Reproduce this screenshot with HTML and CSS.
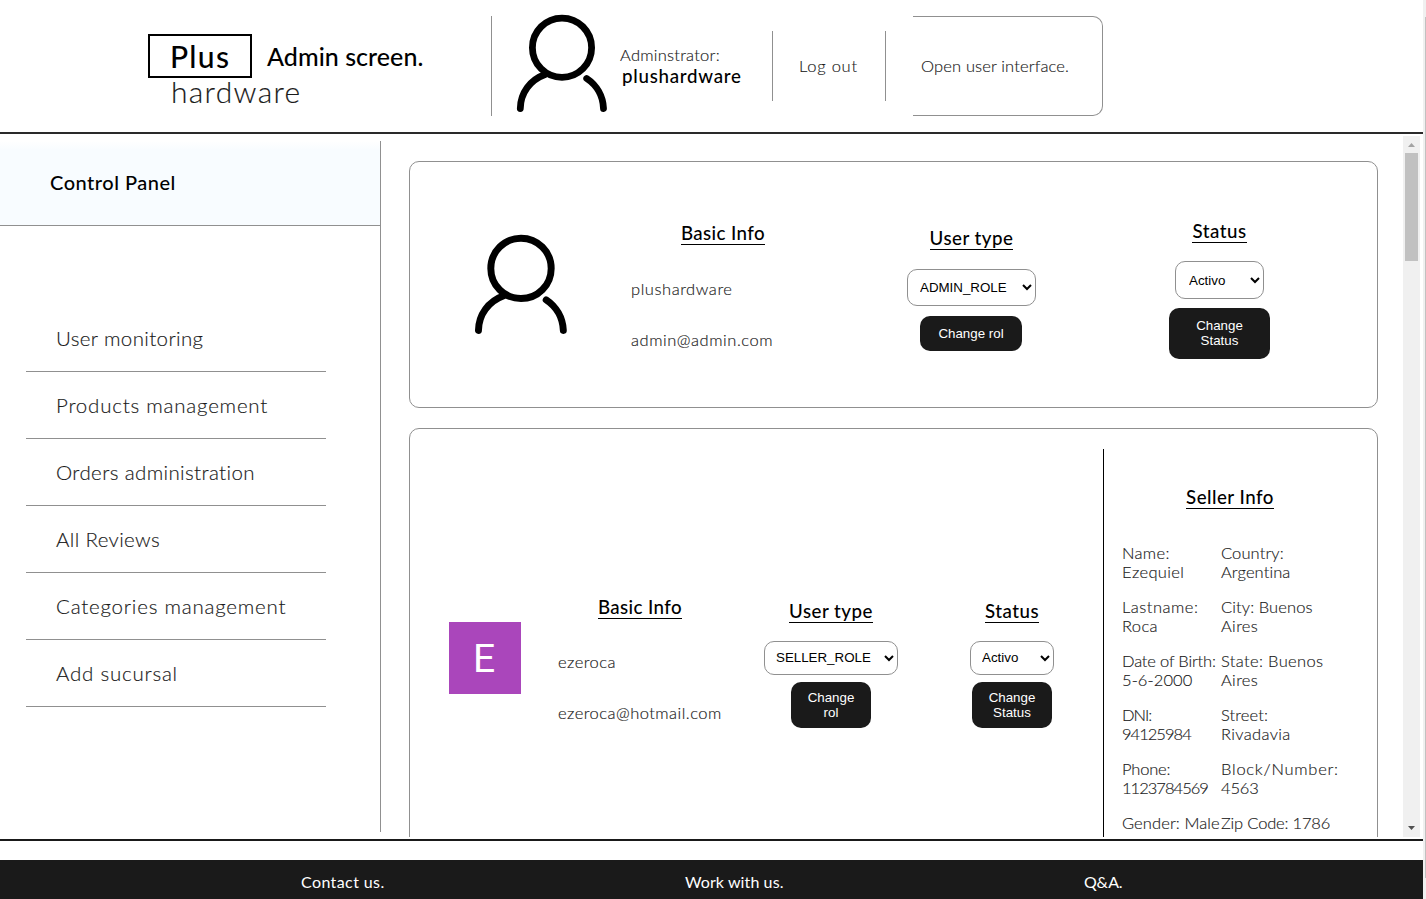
FILE: index.html
```html
<!DOCTYPE html>
<html lang="en">
<head>
<meta charset="utf-8">
<title>Plus hardware - Admin</title>
<link rel="stylesheet" href="styles.css">
</head>
<body>
<svg class="defs" aria-hidden="true">
  <symbol id="user" viewBox="0 0 100 100">
    <g fill="none" stroke="#000" stroke-width="6.8" stroke-linecap="round">
      <circle cx="50" cy="34.700" r="29.600"/>
      <path d="M33 61.500C18 67 8.500 80 8.300 95.500"/>
      <path d="M74.700 65.500C84.500 72 91 83 91.500 95.500"/>
    </g>
  </symbol>
</svg>
<div class="page">
  <header class="top">
    <div class="logo"><span class="logo-box">Plus</span><span class="logo-sub">hardware</span></div>
    <h1 class="screen">Admin screen.</h1>
    <div class="account">
      <svg class="avatar-top"><use href="#user"/></svg>
      <div class="who"><span class="who-role">Adminstrator:</span><strong class="who-name">plushardware</strong></div>
      <a class="logout">Log out</a>
      <a class="open-ui">Open user interface.</a>
    </div>
  </header>
  <main class="main">
    <nav class="side">
      <h2 class="side-title">Control Panel</h2>
      <ul class="menu">
        <li>User monitoring</li>
        <li class="loose">Products management</li>
        <li>Orders administration</li>
        <li>All Reviews</li>
        <li class="loose">Categories management</li>
        <li class="loose">Add sucursal</li>
      </ul>
    </nav>
    <section class="list">
      <article class="card card-admin">
        <svg class="avatar"><use href="#user"/></svg>
        <div class="basic">
          <h3 class="t-basic">Basic Info</h3>
          <p class="p-name">plushardware</p>
          <p class="p-mail">admin@admin.com</p>
        </div>
        <div class="role">
          <h3>User type</h3>
          <select><option>ADMIN_ROLE</option></select>
          <button>Change rol</button>
        </div>
        <div class="status">
          <h3>Status</h3>
          <select><option>Activo</option></select>
          <button>Change Status</button>
        </div>
      </article>
      <article class="card card-seller">
        <div class="initial">E</div>
        <div class="basic">
          <h3 class="t-basic">Basic Info</h3>
          <p class="p-name">ezeroca</p>
          <p class="p-mail">ezeroca@hotmail.com</p>
        </div>
        <div class="role">
          <h3>User type</h3>
          <select><option>SELLER_ROLE</option></select>
          <button>Change rol</button>
        </div>
        <div class="status">
          <h3>Status</h3>
          <select><option>Activo</option></select>
          <button>Change Status</button>
        </div>
        <div class="seller">
          <h3 class="t-seller">Seller Info</h3>
          <div class="facts">
            <p>Name:<br>Ezequiel</p><p><span class="snug">Country:</span><br><span class="snug">Argentina</span></p>
            <p><span class="wide">Lastname:</span><br>Roca</p><p><span class="snug">City: Buenos</span><br>Aires</p>
            <p><span class="tight">Date of Birth:</span><br><span class="snug">5-6-2000</span></p><p>State: Buenos<br>Aires</p>
            <p><span class="digits">DNI:</span><br><span class="digits">94125984</span></p><p><span class="snug">Street:</span><br>Rivadavia</p>
            <p><span class="tight">Phone:</span><br><span class="digits">1123784569</span></p><p><span class="wider">Block/Number:</span><br><span class="tight">4563</span></p>
            <p class="snug">Gender: Male</p><p class="tight">Zip Code: 1786</p>
          </div>
        </div>
      </article>
    </section>
    <div class="bar">
      <svg class="arrow" viewBox="0 0 17 17"><path d="M5 11h7L8.500 7z" fill="#a3a3a3"/></svg>
      <div class="thumb"></div>
      <svg class="arrow arrow-down" viewBox="0 0 17 17"><path d="M5 6h7L8.500 10z" fill="#505050"/></svg>
    </div>
  </main>
  <footer class="foot">
    <a class="f1">Contact us.</a><a class="f2">Work with us.</a><a class="f3">Q&amp;A.</a>
  </footer>
</div>
<div class="edge"><div class="edge-thumb"></div></div>
</body>
</html>
```
FILE: styles.css
```css
* { box-sizing: border-box; margin: 0; padding: 0; }
body {
  display: flex;
  width: 1426px;
  height: 899px;
  overflow: hidden;
  background: #fff;
  color: #1a1a1a;
  font: 300 16.500px/19px Lato, "Open Sans", sans-serif;
  -webkit-text-stroke: .15px;
  white-space: nowrap;
}
.defs { display: none; }
.page { width: 1423px; display: flex; flex-direction: column; }
h1, h2, h3, strong, select, button, .foot, .logo-box, .initial { -webkit-text-stroke: 0; }
h1, h2, h3, strong { font-weight: 500; color: #000; }

/* header */
.top { display: flex; height: 134px; border-bottom: 2px solid #2a2a2a; padding-left: 148px; }
.logo { width: 119px; padding-top: 34px; display: flex; flex-direction: column; }
.logo-box { width: 104px; height: 44px; border: 2px solid #000; padding-left: 20px; font-size: 30px; line-height: 41px; letter-spacing: 1.3px; font-weight: 500; color: #000; }
.logo-sub { padding-left: 23px; font-size: 30px; line-height: 27px; letter-spacing: 1.3px; }
.screen { width: 224px; padding-top: 38px; font-size: 25px; line-height: 36px; letter-spacing: .05px; }
.account { display: flex; align-self: flex-start; margin-top: 16px; height: 100px; border-left: 1px solid #909090; }
.avatar-top { width: 100px; height: 100px; margin: -3px 0 0 20px; }
.who { width: 161px; height: 70px; margin-top: 15px; border-right: 1px solid #909090; padding: 15px 0 0 8px; display: flex; flex-direction: column; }
.who-role { letter-spacing: .25px; }
.who-name { padding-left: 2px; font-size: 18.700px; line-height: 22px; letter-spacing: .75px; }
.logout { width: 113px; height: 70px; margin-top: 15px; border-right: 1px solid #909090; padding: 26px 0 0 26px; letter-spacing: .75px; }
.open-ui { width: 190px; height: 100px; margin-left: 27px; border: 1px solid #909090; border-left: 0; border-radius: 0 10px 10px 0; padding: 40px 0 0 8px; letter-spacing: .15px; }

/* body */
.main { display: flex; height: 707px; border-bottom: 2px solid #1a1a1a; }
.side { width: 381px; height: 691px; margin-top: 7px; border-right: 1px solid #909090; }
.side-title { height: 85px; border-bottom: 1px solid #909090; background: linear-gradient(#fff, #f8fcff 9px); padding: 29px 0 0 50px; font-size: 20px; line-height: 24px; letter-spacing: .5px; }
.menu { list-style: none; width: 300px; margin: 79px 0 0 26px; }
.menu li { height: 67px; border-bottom: 1px solid #909090; padding: 20px 0 0 30px; font-size: 20.500px; line-height: 26px; letter-spacing: .37px; }
.menu .loose { letter-spacing: .78px; }
.list { width: 1022px; height: 703px; padding: 27px 0 0 28px; overflow: hidden; }
.card { display: flex; align-items: flex-start; width: 969px; border: 1px solid #909090; border-radius: 10px; }
h3 { align-self: center; height: 22px; border-bottom: 1px solid #000; font-size: 18.700px; line-height: 20px; letter-spacing: .5px; }
.t-basic { letter-spacing: .4px; }
.basic, .role, .status, .seller { display: flex; flex-direction: column; }
.role, .status { align-items: center; }
select { width: 100%; border: 1px solid #909090; border-radius: 10px; background: #fff; color: #000; font: 13.333px "Liberation Sans", Arial, sans-serif; }
button { border: 0; border-radius: 10px; background: #1a1a1a; color: #fff; font: 13.333px/15px "Liberation Sans", Arial, sans-serif; white-space: normal; }
.basic p { letter-spacing: .55px; }

.card-admin { height: 247px; padding-left: 60px; }
.avatar { width: 102px; height: 102px; margin-top: 71px; }
.card-admin .basic { width: 184px; margin: 61px 0 0 59px; }
.p-name { margin-top: 35px; }
.p-mail { margin-top: 32px; }
.card-admin .role { width: 129px; margin: 66px 0 0 92px; }
.card-admin .role select { height: 37px; margin-top: 19px; padding: 0 9px 0 8px; }
.card-admin .role button { width: 102px; height: 35px; margin: 10px 1px 0 0; }
.card-admin .status { width: 101px; margin: 59px 0 0 133px; }
.card-admin .status select { width: 89px; height: 38px; margin-top: 18px; padding: 0 1px 0 9px; }
.card-admin .status button { width: 101px; height: 51px; margin-top: 9px; padding: 0 20px 2px; }

.card-seller { height: 560px; margin-top: 20px; padding-left: 39px; }
.initial { width: 72px; height: 72px; margin-top: 193px; padding-right: 2px; background: #aa46bb; color: #fff; font: 400 39px/74px Roboto, sans-serif; text-align: center; }
.card-seller .basic { width: 164px; margin: 168px 0 0 37px; }
.card-seller .basic p { letter-spacing: .47px; }
.card-seller .p-name { margin-top: 34px; letter-spacing: .65px; }
.card-seller .role { width: 134px; margin: 172px 0 0 42px; }
.card-seller select { height: 34px; margin-top: 18px; padding: 0 1px 1px 7px; }
.card-seller .status { width: 84px; margin: 172px 0 0 72px; }
.card-seller button { width: 80px; height: 46px; margin-top: 7px; padding: 0 12px; }
.seller { width: 254px; height: 540px; margin: 20px 0 0 49px; border-left: 1px solid #000; padding: 38px 0 0 18px; }
.t-seller { margin-left: -19px; }
.facts { display: grid; grid-template-columns: 99px 130px; row-gap: 16px; margin-top: 35px; letter-spacing: .35px; }
.wide { letter-spacing: .5px; }
.wider { letter-spacing: .75px; }
.snug { letter-spacing: .1px; }
.tight { letter-spacing: -.18px; }
.digits { letter-spacing: -.98px; }

/* list scrollbar */
.bar { width: 17px; height: 701px; margin-top: 2px; background: #f0f0f0; display: flex; flex-direction: column; }
.arrow { width: 17px; height: 17px; }
.thumb { width: 13px; height: 108px; margin-left: 2px; background: #c1c1c1; }
.arrow-down { margin-top: auto; }

/* footer */
.foot { display: flex; height: 39px; margin-top: 19px; background: #1a1a1a; color: #fff; padding: 12px 0 0 301px; font-size: 16px; font-weight: 400; }
.f1, .f2 { flex: none; }
.f1 { width: 384px; letter-spacing: .4px; }
.f2 { width: 399px; letter-spacing: .1px; }
.f3 { letter-spacing: -.2px; }

/* window edge */
.edge { width: 3px; background: #f0f0f0; padding-left: 2px; }
.edge-thumb { width: 1px; height: 861px; margin-top: 17px; background: #c1c1c1; }
```
